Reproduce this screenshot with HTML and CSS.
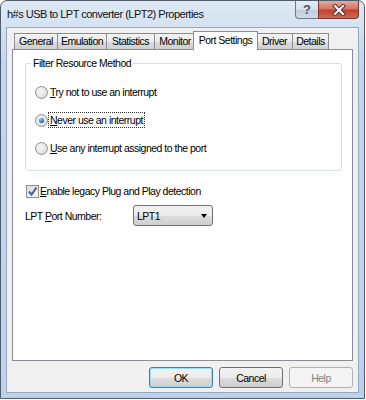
FILE: index.html
```html
<!DOCTYPE html>
<html lang="en">
<head>
  <meta charset="UTF-8">
  <title>h#s USB to LPT converter (LPT2) Properties</title>
  <link rel="stylesheet" href="styles.css">
</head>
<body>

  <div class="window">
    <div class="titlebar">
      <span class="title">h#s USB to LPT converter (LPT2) Properties</span>
      <div class="caption-buttons">
        <span class="cap-btn cap-help">?</span>
        <span class="cap-btn cap-close">
          <svg width="14" height="12" viewBox="0 0 14 12">
            <path d="M3 2 L11 10 M11 2 L3 10" stroke="#4a2a28" stroke-width="4" stroke-linecap="square"/>
            <path d="M3 2 L11 10 M11 2 L3 10" stroke="#fff" stroke-width="2.2" stroke-linecap="square"/>
          </svg>
        </span>
      </div>
    </div>

    <div class="client">
      <div class="tabs">
        <span class="tab tab-general">General</span>
        <span class="tab tab-emulation">Emulation</span>
        <span class="tab tab-statistics">Statistics</span>
        <span class="tab tab-monitor">Monitor</span>
        <span class="tab tab-port active">Port Settings</span>
        <span class="tab tab-driver">Driver</span>
        <span class="tab tab-details">Details</span>
      </div>

      <div class="panel">
        <fieldset class="group">
          <legend>Filter Resource Method</legend>
          <div class="option">
            <span class="radio"></span>
            <span class="option-text"><u>T</u>ry not to use an interrupt</span>
          </div>
          <div class="option">
            <span class="radio checked"></span>
            <span class="option-text focused"><u>N</u>ever use an interrupt</span>
          </div>
          <div class="option">
            <span class="radio"></span>
            <span class="option-text"><u>U</u>se any interrupt assigned to the port</span>
          </div>
        </fieldset>

        <div class="check-row">
          <span class="checkbox">
            <svg width="11" height="11" viewBox="0 0 11 11">
              <path d="M2 5.5 L4.5 8.5 L9.5 1.5" fill="none" stroke="#4a5d9a" stroke-width="2"/>
            </svg>
          </span>
          <span><u>E</u>nable legacy Plug and Play detection</span>
        </div>

        <div class="port-row">
          <span class="port-label">LPT <u>P</u>ort Number:</span>
          <div class="combo">
            <span>LPT1</span>
            <span class="combo-arrow"></span>
          </div>
        </div>
      </div>

      <div class="buttons">
        <span class="btn default">OK</span>
        <span class="btn">Cancel</span>
        <span class="btn disabled">Help</span>
      </div>
    </div>
  </div>

</body>
</html>
```

FILE: styles.css
```css
* {
  box-sizing: border-box;
}
body {
  margin: 0;
  background: #fff;
  font-family: 'Liberation Sans', Arial, sans-serif;
  font-size: 10.5px;
  letter-spacing: -0.5px;
  color: #000;
}
.window {
  width: 365px;
  height: 399px;
  border: 1px solid #4f5b69;
  border-radius: 7px 7px 0 0;
  background: linear-gradient(180deg, #dfe9f5 0px, #d3e1f1 28px, #c2d6ee 60px, #bcd2ec 100%);
}
.titlebar {
  height: 26px;
  display: flex;
  align-items: flex-start;
  padding: 0 5px 0 6px;
}
.title {
  padding-top: 7px;
  font-size: 11px;
  color: #111;
}
.caption-buttons {
  margin-left: auto;
  display: flex;
}
.cap-btn {
  height: 18px;
  border: 1px solid #6d7b8d;
  border-top: none;
  display: flex;
  align-items: center;
  justify-content: center;
}
.cap-help {
  width: 23px;
  border-radius: 0 0 0 4px;
  border-right: none;
  background: linear-gradient(180deg, #e6edf5 0%, #d5dee9 50%, #c3ceda 51%, #cdd8e4 100%);
  color: #4c5560;
  font-weight: bold;
  font-size: 13px;
  letter-spacing: 0;
}
.cap-close {
  width: 41px;
  border-radius: 0 0 4px 0;
  border-color: #7a3a33;
  background: linear-gradient(180deg, #e8a89e 0%, #d67565 45%, #c4402c 55%, #cf6b55 100%);
}
.client {
  margin: 0 5px 0 5px;
  height: 366px;
  background: #f0f0f0;
  border: 1px solid #95a8bf;
  padding: 0 5px 4px 5px;
}
.tabs {
  display: flex;
  margin: 5px 0 0 2px;
  height: 16px;
  position: relative;
  z-index: 1;
}
.tab {
  height: 16px;
  border: 1px solid #898c95;
  border-bottom: none;
  border-right: none;
  line-height: 15px;
  text-align: center;
  white-space: nowrap;
  background: linear-gradient(180deg, #f2f2f2 0%, #ebebeb 50%, #dddddd 51%, #cfcfcf 100%);
}
.tab-general { width: 43px; }
.tab-emulation { width: 49px; }
.tab-statistics { width: 48px; }
.tab-monitor { width: 41px; }
.tab-port { width: 61px; }
.tab-driver { width: 36px; }
.tab-details {
  width: 37px;
  border-right: 1px solid #898c95;
}
.tab.active {
  width: 65px;
  height: 19px;
  margin: -2px -2px 0 -2px;
  line-height: 17px;
  background: #fff;
  border-right: 1px solid #898c95;
  position: relative;
  z-index: 2;
}
.panel {
  height: 312px;
  background: #fff;
  border: 1px solid #898c95;
  padding: 7px 10px 0 12px;
}
.group {
  margin: 0;
  border: 1px solid #d5dfe5;
  border-radius: 3px;
  padding: 8px 0 8px 9px;
}
.group legend {
  padding: 0 2px;
  margin-left: -4px;
  line-height: 13px;
}
.option {
  height: 28px;
  display: flex;
  align-items: center;
}
.radio {
  width: 13px;
  height: 13px;
  border: 1px solid #8e8f8f;
  border-radius: 50%;
  background: radial-gradient(circle at 40% 40%, #f8f8f8 0%, #e2e2e2 60%, #cfcfcf 100%);
  display: flex;
  align-items: center;
  justify-content: center;
}
.radio.checked::after {
  content: "";
  width: 5px;
  height: 5px;
  border-radius: 50%;
  background: radial-gradient(circle at 40% 35%, #8fc6f2 0%, #2a6cb5 60%, #1b3f78 100%);
}
.option-text {
  padding: 1px 1px;
  border: 1px solid transparent;
}
.option-text.focused {
  border: 1px dotted #333;
}
.check-row {
  display: flex;
  align-items: center;
  gap: 1px;
  margin: 12px 0 0 1px;
  height: 16px;
}
.checkbox {
  width: 13px;
  height: 13px;
  border: 1px solid #8e8f8f;
  background: linear-gradient(135deg, #dcdcdc 0%, #f6f6f6 100%);
  display: flex;
  align-items: center;
  justify-content: center;
}
.port-row {
  display: flex;
  align-items: center;
  margin-top: 6px;
}
.port-label {
  width: 108px;
}
.combo {
  width: 80px;
  height: 21px;
  border: 1px solid #707070;
  border-radius: 3px;
  background: linear-gradient(180deg, #f2f2f2 0%, #ebebeb 50%, #dddddd 51%, #cfcfcf 100%);
  display: flex;
  align-items: center;
  justify-content: space-between;
  padding: 0 5px 0 3px;
}
.combo-arrow {
  width: 0;
  height: 0;
  border-left: 3.5px solid transparent;
  border-right: 3.5px solid transparent;
  border-top: 4px solid #000;
}
.buttons {
  display: flex;
  justify-content: flex-end;
  gap: 6px;
  margin-top: 6px;
}
.btn {
  width: 64px;
  height: 21px;
  border: 1px solid #707070;
  border-radius: 3px;
  background: linear-gradient(180deg, #f2f2f2 0%, #ebebeb 50%, #dddddd 51%, #cfcfcf 100%);
  display: flex;
  align-items: center;
  justify-content: center;
}
.btn.default {
  border-color: #3c7fb1;
  box-shadow: inset 0 0 0 1px #9fdcf5;
}
.btn.disabled {
  border-color: #adb2b5;
  background: #f4f4f4;
  color: #838383;
}
```
